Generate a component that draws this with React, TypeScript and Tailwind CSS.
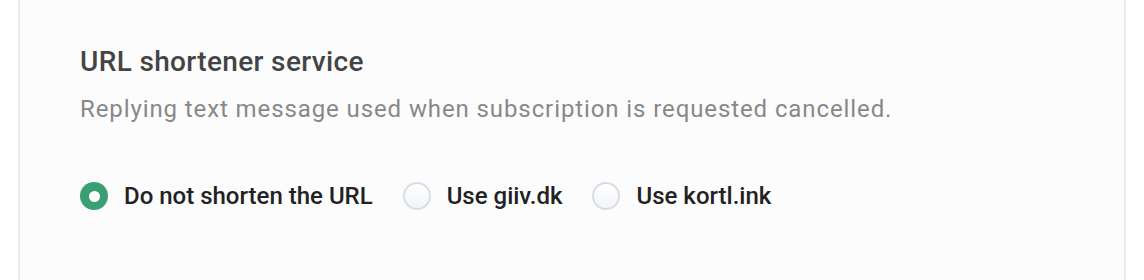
import { useState } from "react";

const options = [
  { id: "none", label: "Do not shorten the URL" },
  { id: "giiv", label: "Use giiv.dk" },
  { id: "kortl", label: "Use kortl.ink" },
];

export default function App() {
  const [selected, setSelected] = useState("none");

  return (
    <div className="h-[280px] bg-white px-[18px] font-['Roboto',sans-serif]">
      <section className="h-full border-x-2 border-[#e8ebf1] bg-[#fcfcfd] px-[60px] pt-[45px]">
        <h2 className="text-[28px] leading-[34px] font-medium tracking-[0.35px] text-[#444444]">URL shortener service</h2>
        <p className="mt-[15px] text-[24px] leading-[30px] tracking-[0.9px] text-[#888888]">
          Replying text message used when subscription is requested cancelled.
        </p>
        <div className="mt-[57px] flex items-center gap-[30px]">
          {options.map((o) => {
            const active = o.id === selected;
            return (
              <label key={o.id} className="flex cursor-pointer items-center gap-[16px]" onClick={() => setSelected(o.id)}>
                <span
                  className={
                    active
                      ? "flex h-[28px] w-[28px] items-center justify-center rounded-full bg-[#3a9f74]"
                      : "h-[28px] w-[28px] rounded-full border-2 border-[#dadde8] bg-gradient-to-b from-white to-[#f3f4f8]"
                  }
                >
                  {active && <span className="h-[11px] w-[11px] rounded-full bg-white" />}
                </span>
                <span className="text-[24px] leading-[30px] font-medium text-[#222222]">{o.label}</span>
              </label>
            );
          })}
        </div>
      </section>
    </div>
  );
}
